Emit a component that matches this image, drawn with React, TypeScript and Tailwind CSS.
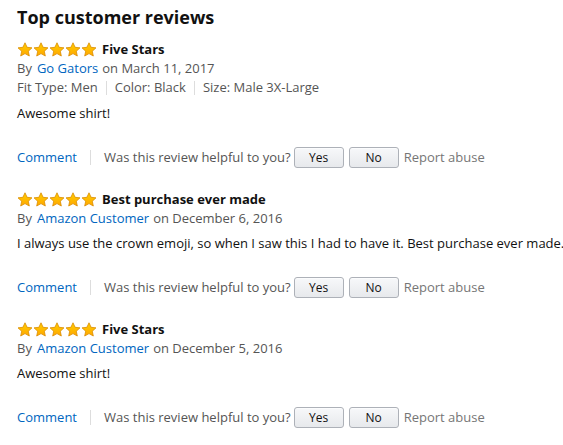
import React from "react";

type Review = {
  title: string;
  author: string;
  date: string;
  meta?: string[];
  body: string;
};

const reviews: Review[] = [
  {
    title: "Five Stars",
    author: "Go Gators",
    date: "March 11, 2017",
    meta: ["Fit Type: Men", "Color: Black", "Size: Male 3X-Large"],
    body: "Awesome shirt!",
  },
  {
    title: "Best purchase ever made",
    author: "Amazon Customer",
    date: "December 6, 2016",
    body: "I always use the crown emoji, so when I saw this I had to have it. Best purchase ever made.",
  },
  {
    title: "Five Stars",
    author: "Amazon Customer",
    date: "December 5, 2016",
    body: "Awesome shirt!",
  },
];

const Star = () => (
  <svg width="16" height="15" viewBox="0 0 24 23">
    <defs>
      <linearGradient id="sg" x1="0" y1="0" x2="0" y2="1">
        <stop offset="0" stopColor="#ffce00" />
        <stop offset="1" stopColor="#ffa700" />
      </linearGradient>
    </defs>
    <path
      d="M12 1.2l3.2 6.9 7.5.9-5.6 5.1 1.5 7.4L12 17.8l-6.6 3.7 1.5-7.4L1.3 9l7.5-.9z"
      fill="url(#sg)"
      stroke="#d98b00"
      strokeWidth="1.2"
      strokeLinejoin="round"
    />
  </svg>
);

const Btn = ({ label }: { label: string }) => (
  <button className="w-[50px] h-[21px] rounded-[3px] border border-[#adb1b8] bg-gradient-to-b from-[#f7f8fa] to-[#e7e9ec] text-[12px] leading-none text-[#111] shadow-[0_1px_0_rgba(255,255,255,.6)_inset]">
    {label}
  </button>
);

const ReviewItem = ({ r }: { r: Review }) => (
  <div className="flex flex-col">
    <div className="flex items-center gap-[5px] h-[19px] mt-[1px]">
      <div className="flex">
        {[0, 1, 2, 3, 4].map((i) => (
          <Star key={i} />
        ))}
      </div>
      <span className="text-[13px] font-bold text-[#111]">{r.title}</span>
    </div>
    <div className="h-[19px] flex items-center text-[13px] text-[#555]">
      By<span className="text-[#0066c0] ml-[5px] mr-[4px]">{r.author}</span>on {r.date}
    </div>
    {r.meta && (
      <div className="h-[20px] flex items-center text-[13px] text-[#555]">
        {r.meta.map((m, i) => (
          <React.Fragment key={m}>
            {i > 0 && <span className="mx-[8px] w-px h-[14px] bg-[#ddd]" />}
            <span>{m}</span>
          </React.Fragment>
        ))}
      </div>
    )}
    <div className="mt-[6px] h-[19px] flex items-center text-[13px] text-[#111] whitespace-nowrap">{r.body}</div>
    <div className="mt-[24px] h-[21px] flex items-center text-[13px]">
      <span className="text-[#0066c0]">Comment</span>
      <span className="mx-[13px] w-px h-[15px] bg-[#ddd]" />
      <span className="text-[#555] mr-[3px]">Was this review helpful to you?</span>
      <Btn label="Yes" />
      <span className="w-[5px]" />
      <Btn label="No" />
      <span className="ml-[5px] text-[#767676]">Report abuse</span>
    </div>
  </div>
);

export default function App() {
  return (
    <div className="w-[563px] h-[445px] bg-white pl-[17px] pt-[4px]" style={{ fontFamily: "'Open Sans', 'Noto Sans', sans-serif" }}>
      <h2 className="text-[18px] font-bold text-[#111] h-[27px] flex items-center">Top customer reviews</h2>
      <div className="flex flex-col gap-[21px] mt-[8px]">
        {reviews.map((r, i) => (
          <ReviewItem key={i} r={r} />
        ))}
      </div>
    </div>
  );
}
